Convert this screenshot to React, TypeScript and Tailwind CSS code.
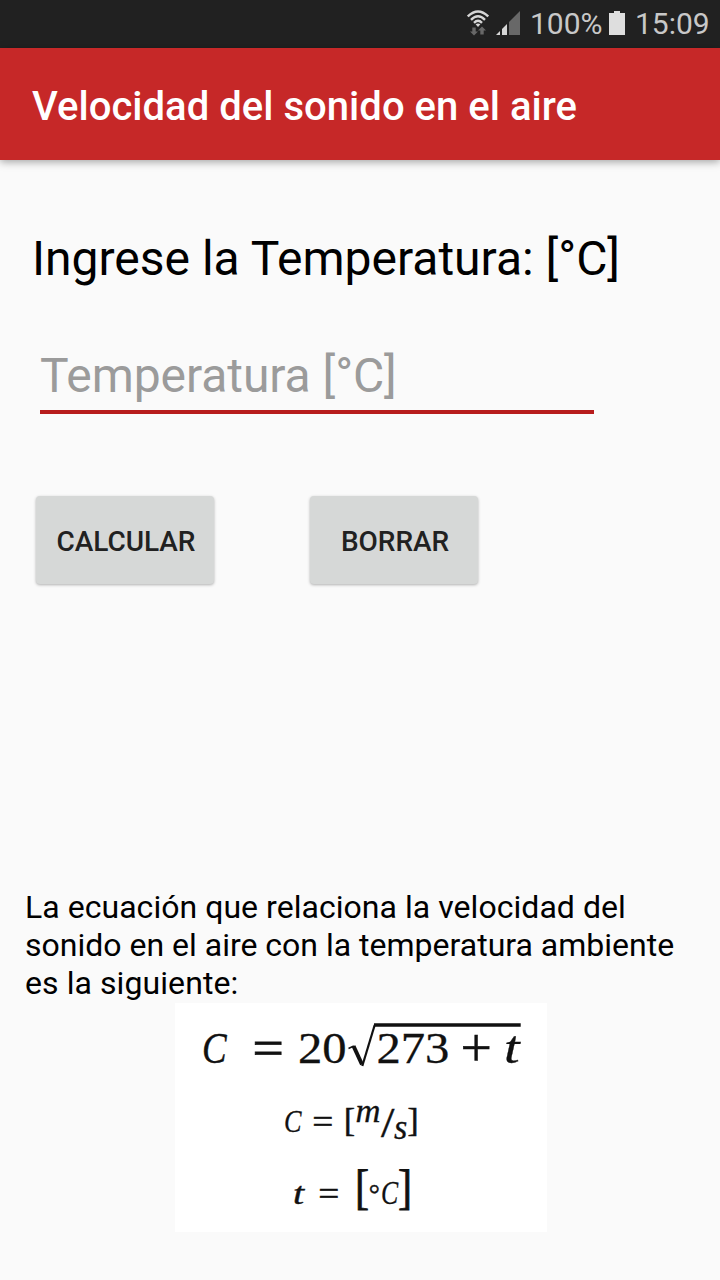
import type { ReactNode } from "react";

type GlyphProps = {
  x: number;
  y: number;
  size: number;
  sx?: number;
  sy?: number;
  weight?: number;
  italic?: boolean;
  children: ReactNode;
};

function Glyph({ x, y, size, sx = 1, sy = 1, weight = 0.4, italic = false, children }: GlyphProps) {
  return (
    <text
      transform={`translate(${x} ${y}) scale(${sx} ${sy})`}
      fontSize={size}
      fontStyle={italic ? "italic" : "normal"}
      stroke="#111"
      strokeWidth={weight}
    >
      {children}
    </text>
  );
}

function WifiIcon() {
  return (
    <svg className="h-[26px] w-[22px]" viewBox="0 0 22 26" fill="none">
      <g stroke="#d6d6d6" strokeWidth="2.4">
        <path d="M0.800 6.500Q11-3.600 21.200 6.500" />
        <path d="M4 9.800Q11 2.800 18 9.800" />
        <path d="M7 12.800Q11 8.800 15 12.800" />
      </g>
      <path d="M8.600 14.200Q11 12.600 13.400 14.200L11 17Z" fill="#d6d6d6" />
      <path d="M5.300 17.500h3.400v4h2.300L7 25.500 3 21.500h2.300z" fill="#686868" />
      <path d="M13.300 24.500h3.400v-4H19L15 16.500 11 20.500h2.300z" fill="#686868" />
    </svg>
  );
}

function SignalIcon() {
  return (
    <svg className="h-6 w-6" viewBox="0 0 24 24">
      <path d="M0 24L4 20V24Z" fill="#d6d6d6" />
      <path d="M6 24V18L11 13V24Z" fill="#d6d6d6" />
      <path d="M13 24V11L24 0V24Z" fill="#686868" />
    </svg>
  );
}

function StatusBar() {
  return (
    <div className="flex h-12 items-start bg-[#212121] pl-[467px] text-[#c8c8c8]">
      <div className="pt-[10px]"><WifiIcon /></div>
      <div className="pt-[11px] pl-[7px]"><SignalIcon /></div>
      <span className="w-[79px] pl-[10px] text-[30px] leading-[48px] whitespace-nowrap">100%</span>
      <svg className="mt-[11px] ml-[10px] h-6 w-4 shrink-0" viewBox="0 0 16 24" fill="#dedede">
        <path d="M5 0H11V2H16V24H0V2H5Z" />
      </svg>
      <span className="pl-[10px] text-[30px] leading-[48px] whitespace-nowrap">15:09</span>
    </div>
  );
}

function Equations() {
  return (
    <svg
      className="mt-px ml-[175px] block h-[229px] w-[372px] bg-white font-['Liberation_Serif',serif]"
      viewBox="0 0 372 229"
      fill="#111"
    >
      <Glyph x={27} y={60} size={44} sx={0.84} weight={0.4} italic>C</Glyph>
      <Glyph x={77.500} y={62} size={50} sx={1.11} weight={0.8}>=</Glyph>
      <Glyph x={123} y={60} size={45} sx={1.08} weight={0.3}>20</Glyph>
      <path d="M173.500 45.500L178.800 43" fill="none" stroke="#111" strokeWidth="1.5" />
      <path d="M178.500 43L187 61.500" fill="none" stroke="#111" strokeWidth="4" />
      <path d="M187.300 63L199.700 22" fill="none" stroke="#111" strokeWidth="2.200" />
      <path d="M199 22H345.700" fill="none" stroke="#111" strokeWidth="3.400" />
      <Glyph x={201.500} y={60} size={45} sx={1.08} weight={0.3}>273</Glyph>
      <Glyph x={285.500} y={62.500} size={54} sx={1.03} weight={0.5}>+</Glyph>
      <Glyph x={329} y={60} size={46} sx={1.22} weight={0.3} italic>t</Glyph>

      <Glyph x={109} y={128.500} size={32} sx={0.82} weight={0.3} italic>C</Glyph>
      <Glyph x={137.300} y={129.500} size={34} sx={1.1}>=</Glyph>
      <Glyph x={169} y={127.500} size={33} weight={0.6}>[</Glyph>
      <Glyph x={180.500} y={118.500} size={34} sx={1.02} weight={0.3} italic>m</Glyph>
      <Glyph x={206} y={133.500} size={42} sx={1.15}>/</Glyph>
      <Glyph x={219} y={135.500} size={35} sx={0.98} weight={0.3} italic>s</Glyph>
      <Glyph x={232.500} y={127.500} size={33} weight={0.6}>]</Glyph>

      <Glyph x={118} y={200.500} size={32} sx={1.25} italic>t</Glyph>
      <Glyph x={143.300} y={201.500} size={34} sx={1.1}>=</Glyph>
      <Glyph x={180} y={199.500} size={48} sx={0.88} weight={0.8}>[</Glyph>
      <Glyph x={193.800} y={199.500} size={27} sx={1.03}>°</Glyph>
      <Glyph x={206} y={200.500} size={33} sx={0.78} weight={0.3} italic>C</Glyph>
      <Glyph x={223} y={199.500} size={48} sx={0.88} weight={0.8}>]</Glyph>
    </svg>
  );
}

export default function App() {
  const button =
    "h-[88px] rounded-[4px] bg-[#d6d8d7] pt-[3px] pl-[2px] text-[28px] font-medium tracking-[-0.05px] text-[#212121] shadow-[0_1px_3px_rgba(0,0,0,0.3)]";
  return (
    <div className="flex h-[1280px] w-[720px] flex-col overflow-hidden bg-[#fafafa] font-[Roboto,sans-serif]">
      <StatusBar />
      <header className="flex h-28 items-center bg-[#c62828] px-8 pt-[5px] shadow-[0_2px_8px_rgba(0,0,0,0.35)]">
        <h1 className="text-[40px] leading-[48px] font-medium tracking-[0.03px] whitespace-nowrap text-white">
          Velocidad del sonido en el aire
        </h1>
      </header>
      <main className="flex flex-1 flex-col">
        <label htmlFor="temp" className="mt-[71px] ml-8 h-14 text-[48px] leading-[56px] whitespace-nowrap text-black">
          Ingrese la Temperatura: [°C]
        </label>
        <input
          id="temp"
          className="mt-[58px] ml-10 h-[69px] w-[554px] border-b-4 border-[#b71c1c] pb-[3px] text-[48px] tracking-[-0.06px] outline-none placeholder:text-[#9b9b9b] placeholder:opacity-100"
          placeholder="Temperatura [°C]"
        />
        <div className="mt-[82px] ml-9 flex gap-24">
          <button className={`w-[178px] ${button}`}>CALCULAR</button>
          <button className={`w-[168px] ${button}`}>BORRAR</button>
        </div>
        <p className="mt-[304px] ml-[25px] w-[670px] text-[32px] leading-[38px] text-black">
          <span className="tracking-[0.04px]">La ecuación que relaciona la velocidad del</span>
          <br />
          sonido en el aire con la temperatura ambiente
          <br />
          <span className="tracking-[0.08px]">es la siguiente:</span>
        </p>
        <Equations />
      </main>
    </div>
  );
}
